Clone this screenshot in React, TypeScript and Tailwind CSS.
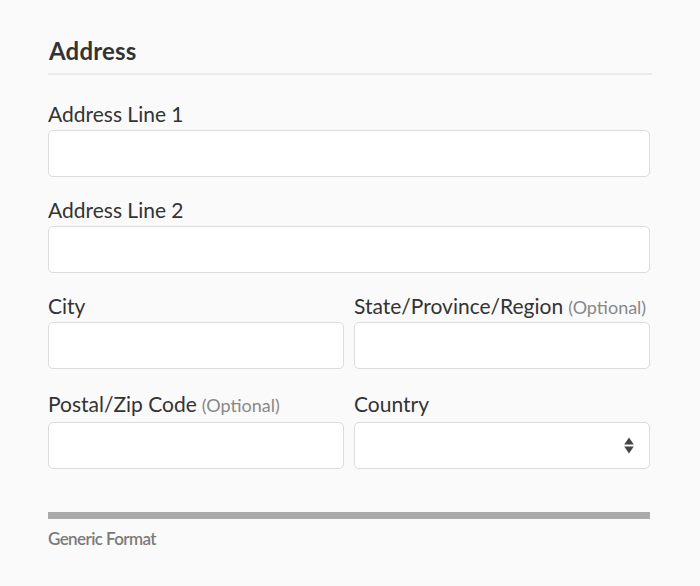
import React from "react";

const font = { fontFamily: "Lato, 'Noto Sans', sans-serif" };

function Label({ text, optional, mb = "mb-[4px]" }: { text: string; optional?: boolean; mb?: string }) {
  return (
    <div className={`h-[25px] flex items-baseline text-[21px] leading-[25px] text-[#333] whitespace-nowrap ${mb}`}>
      <span>{text}</span>
      {optional && <span className="ml-[5px] text-[18px] leading-[25px] text-[#888]">(Optional)</span>}
    </div>
  );
}

function Input() {
  return <div className="h-[47px] rounded-[5px] border border-[#dcdcdc] bg-white" />;
}

function Select() {
  return (
    <div className="h-[47px] rounded-[5px] border border-[#dcdcdc] bg-white flex items-center justify-end pr-[15px]">
      <svg width="10" height="17" viewBox="0 0 10 17">
        <path d="M5 0.5 L9.8 7.5 L0.2 7.5 Z" fill="#444" />
        <path d="M0.2 9.5 L9.8 9.5 L5 16.5 Z" fill="#444" />
      </svg>
    </div>
  );
}

export default function App() {
  return (
    <div className="w-[700px] h-[586px] bg-[#fafafa] pl-[48px] pt-[36px]" style={font}>
      <div className="w-[604px] border-b-2 border-[#ebebeb] pb-[8px]">
        <div className="text-[24px] leading-[29px] font-bold text-[#333] pl-[1px] tracking-[0.2px]">Address</div>
      </div>
      <div className="w-[602px] pt-[26px]">
        <Label text="Address Line 1" />
        <Input />
        <div className="mt-[20px]">
          <Label text="Address Line 2" />
          <Input />
        </div>
        <div className="mt-[20px] grid grid-cols-2 gap-x-[10px]">
          <div>
            <Label text="City" />
            <Input />
          </div>
          <div>
            <Label text="State/Province/Region" optional />
            <Input />
          </div>
        </div>
        <div className="mt-[22px] grid grid-cols-2 gap-x-[10px]">
          <div>
            <Label text="Postal/Zip Code" optional mb="mb-[6px]" />
            <Input />
          </div>
          <div>
            <Label text="Country" mb="mb-[6px]" />
            <Select />
          </div>
        </div>
        <div className="mt-[43px] h-[7px] bg-[#aaaaaa]" />
        <div className="mt-[10px] text-[17px] leading-[20px] font-semibold tracking-[-0.6px] text-[#7a7a7a]">Generic Format</div>
      </div>
    </div>
  );
}
